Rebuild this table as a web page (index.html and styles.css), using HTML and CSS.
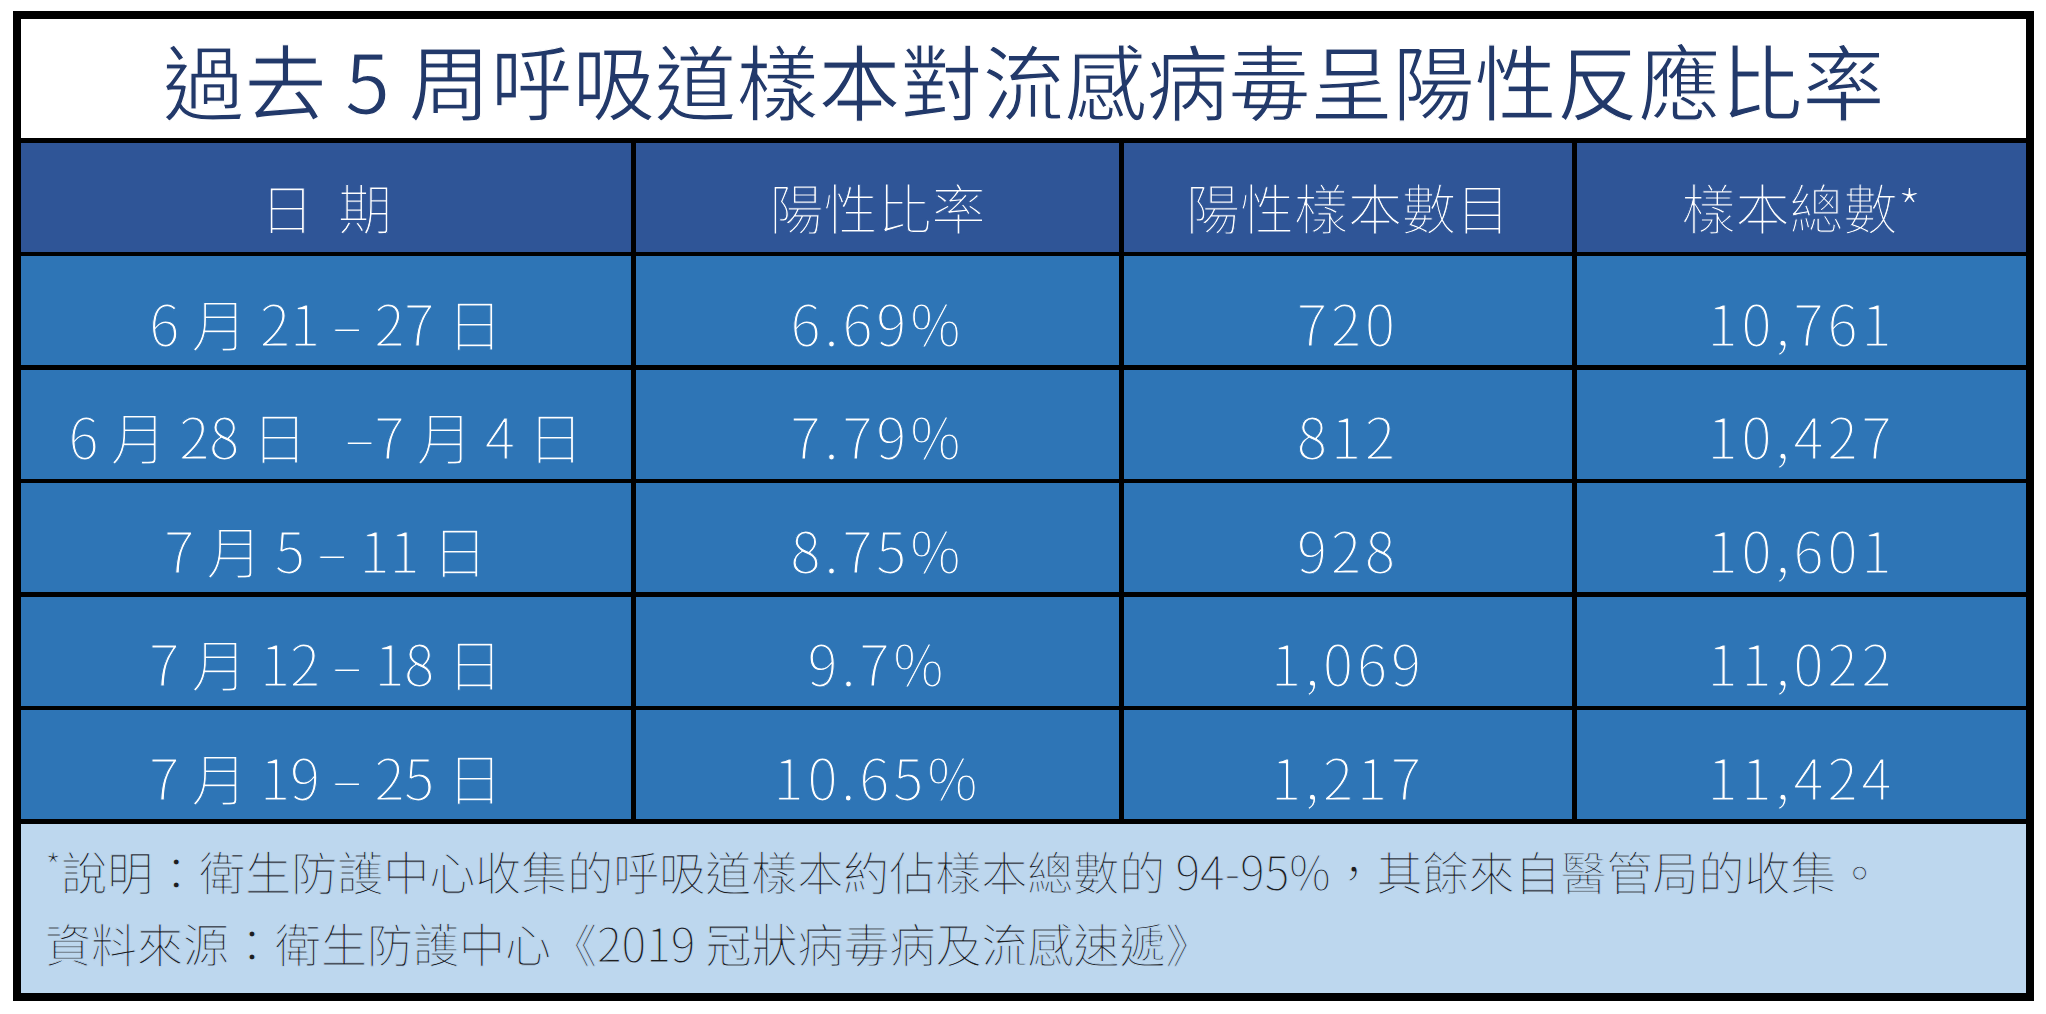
FILE: index.html
```html
<!DOCTYPE html>
<html lang="zh-Hant">
<head>
<meta charset="utf-8">
<title>過去 5 周呼吸道樣本對流感病毒呈陽性反應比率</title>
<link rel="stylesheet" href="styles.css">
</head>
<body>
<div class="frame">
  <div class="title">過去 5 周呼吸道樣本對流感病毒呈陽性反應比率</div>

  <div class="cell head">日&nbsp;&nbsp;期</div>
  <div class="cell head">陽性比率</div>
  <div class="cell head">陽性樣本數目</div>
  <div class="cell head">樣本總數*</div>

  <div class="cell date">6 月 21 – 27 日</div>
  <div class="cell num">6.69%</div>
  <div class="cell num">720</div>
  <div class="cell num">10,761</div>

  <div class="cell date">6 月 28 日 &nbsp;&nbsp;–7 月 4 日</div>
  <div class="cell num">7.79%</div>
  <div class="cell num">812</div>
  <div class="cell num">10,427</div>

  <div class="cell date">7 月 5 – 11 日</div>
  <div class="cell num">8.75%</div>
  <div class="cell num">928</div>
  <div class="cell num">10,601</div>

  <div class="cell date">7 月 12 – 18 日</div>
  <div class="cell num">9.7%</div>
  <div class="cell num">1,069</div>
  <div class="cell num">11,022</div>

  <div class="cell date">7 月 19 – 25 日</div>
  <div class="cell num">10.65%</div>
  <div class="cell num">1,217</div>
  <div class="cell num">11,424</div>

  <div class="note">
    <p class="note-line"><span class="star">*</span>說明：衛生防護中心收集的呼吸道樣本約佔樣本總數的 94-95%，其餘來自醫管局的收集。</p>
    <p class="note-line">資料來源：衛生防護中心《2019 冠狀病毒病及流感速遞》</p>
  </div>
</div>
</body>
</html>
```

FILE: styles.css
```css
html, body {
  margin: 0;
  padding: 0;
  background: #ffffff;
}

body {
  font-family: "Noto Sans CJK TC", "Noto Sans", sans-serif;
}

.frame {
  width: 2005px;
  margin: 11px 0 0 13px;
  border: 8px solid #000000;
  background: #000000;
  display: grid;
  grid-template-columns: 610px 483px 448px 449px;
  grid-template-rows: 119px 109px repeat(5, 109px) 169px;
  column-gap: 5px;
  row-gap: 4.5px;
}

.title {
  grid-column: 1 / -1;
  background: #ffffff;
  color: #22396a;
  font-size: 82px;
  font-weight: 400;
  line-height: 1;
  display: flex;
  align-items: center;
  justify-content: center;
  white-space: nowrap;
  -webkit-text-stroke: 1.2px #ffffff;
}

.cell {
  display: flex;
  align-items: center;
  justify-content: center;
  color: #ffffff;
  font-weight: 300;
  line-height: 1;
  white-space: nowrap;
  box-sizing: border-box;
  padding-top: 20px;
}

.head {
  background: #2f5597;
  font-size: 54px;
  -webkit-text-stroke: 1px #2f5597;
}

.date,
.num {
  background: #2e75b6;
  font-size: 56px;
  padding-top: 22px;
  -webkit-text-stroke: 1px #2e75b6;
}

.num {
  letter-spacing: 4px;
}

.note {
  grid-column: 1 / -1;
  background: #bdd7ee;
  color: #1e1e1e;
  font-size: 46px;
  font-weight: 300;
  line-height: 72px;
  padding: 5px 0 0 24px;
  box-sizing: border-box;
  -webkit-text-stroke: 0.9px #bdd7ee;
}

.note-line {
  margin: 0;
  white-space: nowrap;
}

.star {
  font-size: 0.8em;
  vertical-align: 0.25em;
}
```
